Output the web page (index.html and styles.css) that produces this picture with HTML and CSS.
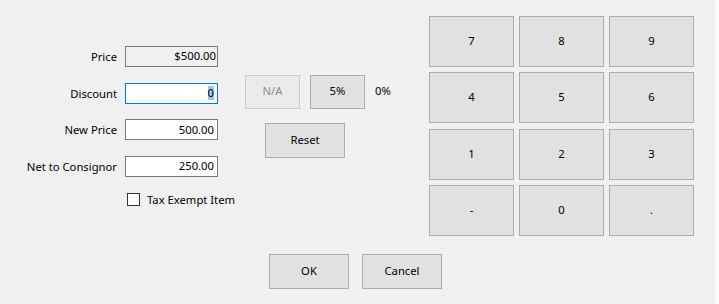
FILE: index.html
```html
<!DOCTYPE html>
<html>
<head>
<meta charset="utf-8">
<link rel="stylesheet" href="styles.css">
</head>
<body>
<div class="window">
  <div class="dialog">
    <div class="top">
      <div class="form">
        <label class="lbl">Price</label>
        <div class="field readonly">$500.00</div>
        <label class="lbl">Discount</label>
        <div class="field focused"><span class="sel">0</span></div>
        <label class="lbl">New Price</label>
        <div class="field">500.00</div>
        <label class="lbl">Net to Consignor</label>
        <div class="field">250.00</div>
        <div class="check-row">
          <span class="checkbox"></span>
          <span class="check-text">Tax Exempt Item</span>
        </div>
      </div>
      <div class="middle">
        <div class="disc-row">
          <button class="btn small disabled">N/A</button>
          <button class="btn small">5%</button>
          <span class="pct">0%</span>
        </div>
        <button class="btn wide reset">Reset</button>
      </div>
      <div class="keypad">
        <button class="btn key">7</button>
        <button class="btn key">8</button>
        <button class="btn key">9</button>
        <button class="btn key">4</button>
        <button class="btn key">5</button>
        <button class="btn key">6</button>
        <button class="btn key">1</button>
        <button class="btn key">2</button>
        <button class="btn key">3</button>
        <button class="btn key">-</button>
        <button class="btn key">0</button>
        <button class="btn key">.</button>
      </div>
    </div>
    <div class="actions">
      <button class="btn wide">OK</button>
      <button class="btn wide">Cancel</button>
    </div>
  </div>
  <div class="edge"></div>
</div>
</body>
</html>
```
FILE: styles.css
```css
html, body {
  margin: 0;
  padding: 0;
}
body {
  width: 719px;
  height: 304px;
  overflow: hidden;
  font-family: "Noto Sans", "Open Sans", sans-serif;
  font-size: 11.25px;
  color: #000;
  background: #f0f0f0;
}
.window {
  display: flex;
  width: 719px;
  height: 304px;
}
.dialog {
  width: 715px;
  height: 304px;
  background: #f0f0f0;
  display: flex;
  flex-direction: column;
}
.edge {
  flex: 1;
  background: #fafafa;
}
.top {
  display: flex;
  align-items: flex-start;
}
.form {
  display: grid;
  grid-template-columns: 117px 93px;
  grid-template-rows: 21px 21px 21px 21px 13px;
  column-gap: 8px;
  row-gap: 15.67px;
  padding-top: 46px;
  width: 218px;
}
.lbl {
  display: flex;
  align-items: center;
  justify-content: flex-end;
  white-space: nowrap;
  line-height: 1;
}
.field {
  box-sizing: border-box;
  height: 21px;
  border: 1px solid #7a7a7a;
  background: #fff;
  display: flex;
  align-items: center;
  justify-content: flex-end;
  padding: 0 3px 1px 2px;
  line-height: 1;
}
.field.readonly {
  background: #f0f0f0;
  padding-right: 1px;
}
.field.focused {
  border-color: #0078d7;
}
.sel {
  background: #99c9ef;
  padding: 1px 0 2px;
}
.check-row {
  grid-column: 2;
  display: flex;
  align-items: center;
  gap: 7px;
  margin-left: 2px;
  white-space: nowrap;
  line-height: 1;
}
.checkbox {
  box-sizing: border-box;
  width: 13px;
  height: 13px;
  border: 1px solid #333;
  background: #fff;
  flex: none;
}
.btn {
  box-sizing: border-box;
  font: inherit;
  color: #000;
  background: #e1e1e1;
  border: 1px solid #adadad;
  padding: 0 0 2px;
  margin: 0;
  line-height: 1;
}
.btn.disabled {
  background: #eaeaea;
  border-color: #cbcbcb;
  color: #8a8a8a;
}
.middle {
  display: flex;
  flex-direction: column;
  padding-top: 75px;
  margin-left: 27px;
}
.disc-row {
  display: flex;
  align-items: center;
  gap: 10px;
}
.small {
  width: 55px;
  height: 34px;
}
.pct {
  line-height: 1;
  padding-bottom: 2px;
}
.wide {
  width: 80px;
  height: 35px;
}
.reset {
  margin-top: 14px;
  margin-left: 20px;
}
.keypad {
  display: grid;
  grid-template-columns: repeat(3, 85px);
  grid-template-rows: repeat(4, 51px);
  column-gap: 5px;
  row-gap: 5.33px;
  padding-top: 16px;
  margin-left: auto;
  margin-right: 21px;
}
.key {
  width: 85px;
  height: 51px;
}
.actions {
  display: flex;
  gap: 13px;
  padding-left: 269px;
  margin-top: 18px;
}
```
